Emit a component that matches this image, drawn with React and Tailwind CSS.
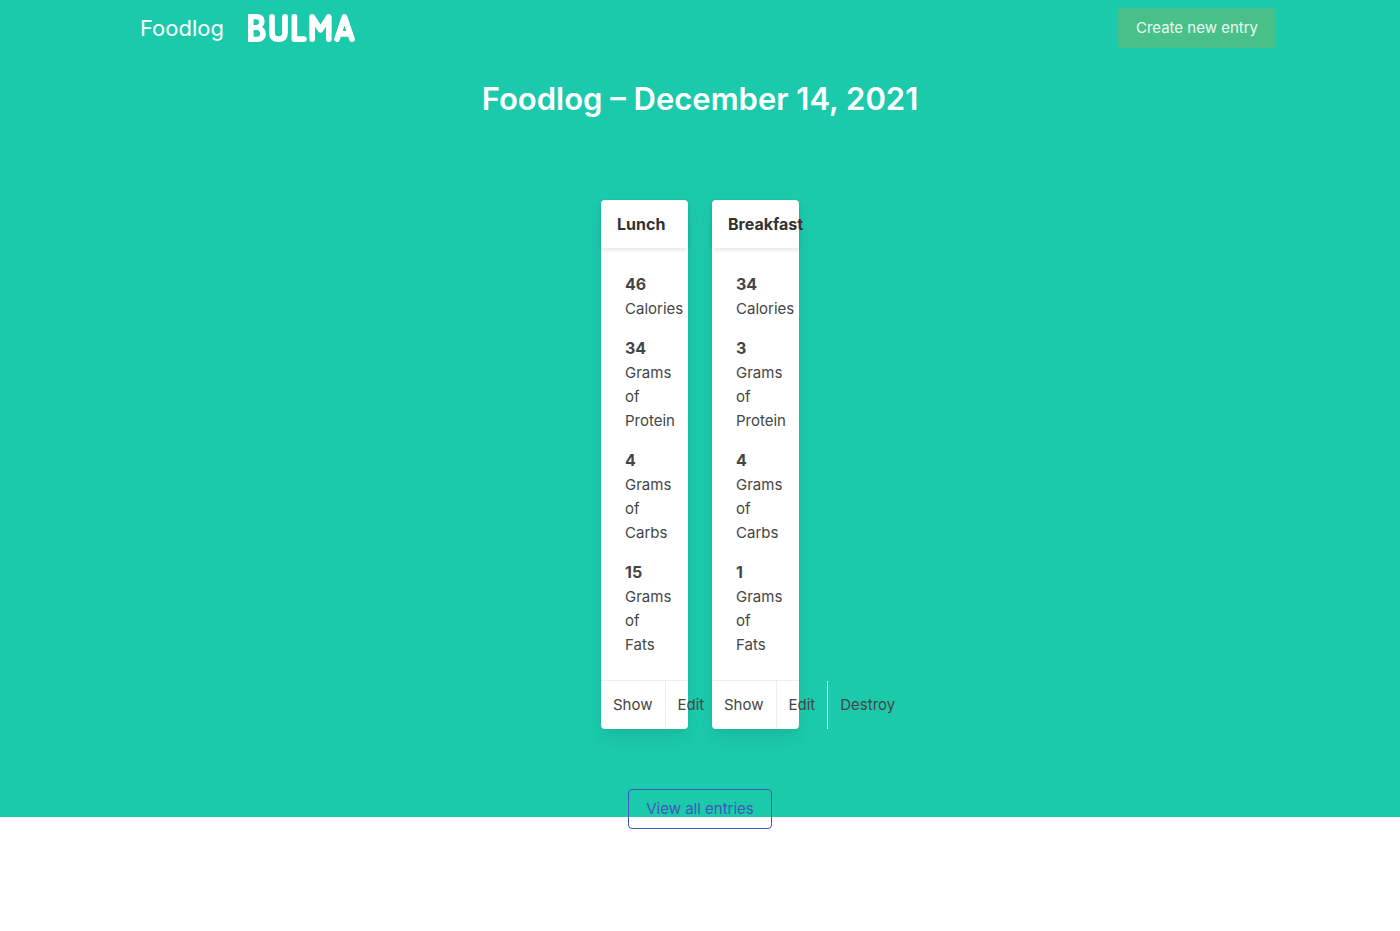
const entries = [
  { name: "Lunch", calories: 46, protein: 34, carbs: 4, fats: 15 },
  { name: "Breakfast", calories: 34, protein: 3, carbs: 4, fats: 1 },
];

function Logo() {
  return (
    <svg
      viewBox="0 0 112 28"
      className="h-7 w-28"
      fill="none"
      stroke="currentColor"
      strokeWidth="5.7"
      strokeLinecap="round"
      strokeLinejoin="round"
      role="img"
      aria-label="Bulma"
    >
      <path
        fill="currentColor"
        fillRule="evenodd"
        stroke="none"
        d="M1 0H8.7C13.6 0 16.6 3 16.6 7.2C16.6 9.8 15.6 11.8 14 13C16.4 14.3 17.8 16.7 17.8 19.8C17.8 24.9 14.4 28 9.4 28H1C.4 28 0 27.6 0 27V1C0 .4.4 0 1 0ZM5.6 5.2V11H8.2C10.2 11 11 9.8 11 8.1C11 6.2 10.2 5.2 8.2 5.2ZM5.6 16V22.8H8.8C11 22.8 12 21.5 12 19.4C12 17.3 11 16 8.8 16Z"
      />
      <path d="M24 2.9V19C24 23 26.3 25.1 30.5 25.1S37 23 37 19V2.9" />
      <path d="M46.4 2.9V25.1H55.9" />
      <path d="M64.2 25.1V2.9L72.5 15.8L80.8 2.9V25.1" />
      <path d="M89 25.1L96.5 2.9L104 25.1M91.5 19.8H101.5" />
    </svg>
  );
}

function Fact({ value, label }) {
  return (
    <p className="text-base leading-6">
      <strong className="font-bold">{value}</strong>{" "}
      <span className="text-[15px] leading-5">{label}</span>
    </p>
  );
}

function EntryCard({ entry }) {
  return (
    <article className="relative w-[87px] rounded bg-white text-[#454545] shadow-[0_8px_16px_-2px_rgba(10,10,10,0.1),0_0_0_1px_rgba(10,10,10,0.02)]">
      <header className="rounded-t px-4 py-3 shadow-[0_2px_4px_rgba(10,10,10,0.1)]">
        <h2 className="text-base leading-6 font-bold text-[#323232]">
          {entry.name}
        </h2>
      </header>
      <div className="flex flex-col gap-4 p-6">
        <Fact value={entry.calories} label="Calories" />
        <Fact value={entry.protein} label="Grams of Protein" />
        <Fact value={entry.carbs} label="Grams of Carbs" />
        <Fact value={entry.fats} label="Grams of Fats" />
      </div>
      <footer className="flex border-t border-[#ededed]">
        <a href="#show" className="border-r border-[#ededed] p-3">
          Show
        </a>
        <a href="#edit" className="border-r border-[#ededed] p-3">
          Edit
        </a>
        <a href="#destroy" className="p-3">
          Destroy
        </a>
      </footer>
    </article>
  );
}

export default function App() {
  return (
    <div className="min-h-screen bg-white font-['Inter',sans-serif] text-[15px] leading-6">
      <div className="bg-[#1bcaab] pb-[88px]">
        <nav className="mx-auto flex max-w-6xl items-center justify-between py-2 pl-4 text-white">
          <div className="flex items-center gap-6">
            <a href="#home" className="text-[22px] leading-9">
              Foodlog
            </a>
            <a href="#bulma">
              <Logo />
            </a>
          </div>
          <button
            type="button"
            className="h-10 rounded bg-[#48c088] px-[18px] text-white/90"
          >
            Create new entry
          </button>
        </nav>
        <main className="pt-6">
          <h1 className="text-center text-[31px] leading-[38px] font-semibold text-white">
            Foodlog – December 14, 2021
          </h1>
          <section className="mt-[82px] flex justify-center gap-6">
            {entries.map((entry) => (
              <EntryCard key={entry.name} entry={entry} />
            ))}
          </section>
        </main>
      </div>
      <div className="-mt-7 flex justify-center">
        <a
          href="#entries"
          className="rounded border border-[#3f58bc] px-[17px] py-[7px] text-[#3f58bc]"
        >
          View all entries
        </a>
      </div>
    </div>
  );
}
